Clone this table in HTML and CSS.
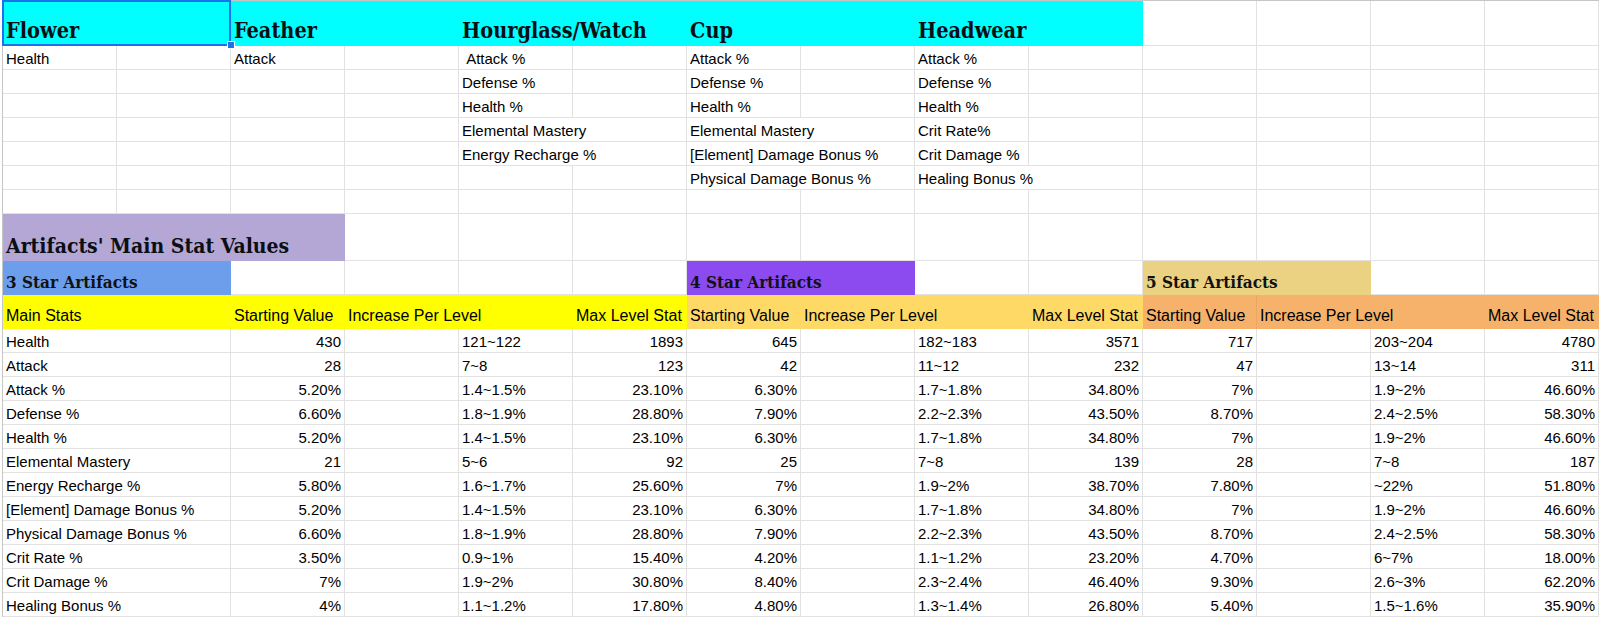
FILE: index.html
```html
<!DOCTYPE html>
<html lang="en">
<head>
<meta charset="utf-8">
<title>Artifacts' Main Stat Values</title>
<link rel="stylesheet" href="styles.css">
</head>
<body>
<div class="sheet">
  <!-- Row 1 -->
  <div class="c s2 cyan h1 sel">Flower</div>
  <div class="c s2 cyan h1">Feather</div>
  <div class="c s2 cyan h1">Hourglass/Watch</div>
  <div class="c s2 cyan h1">Cup</div>
  <div class="c s2 cyan h1">Headwear</div>
  <div class="c"></div><div class="c"></div><div class="c"></div><div class="c"></div>

  <!-- Row 2 -->
  <div class="c">Health</div><div class="c"></div>
  <div class="c">Attack</div><div class="c"></div>
  <div class="c">&nbsp;Attack %</div><div class="c"></div>
  <div class="c">Attack %</div><div class="c"></div>
  <div class="c">Attack %</div><div class="c"></div>
  <div class="c"></div><div class="c"></div><div class="c"></div><div class="c"></div>

  <!-- Row 3 -->
  <div class="c"></div><div class="c"></div><div class="c"></div><div class="c"></div>
  <div class="c">Defense %</div><div class="c"></div>
  <div class="c">Defense %</div><div class="c"></div>
  <div class="c">Defense %</div><div class="c"></div>
  <div class="c"></div><div class="c"></div><div class="c"></div><div class="c"></div>

  <!-- Row 4 -->
  <div class="c"></div><div class="c"></div><div class="c"></div><div class="c"></div>
  <div class="c">Health %</div><div class="c"></div>
  <div class="c">Health %</div><div class="c"></div>
  <div class="c">Health %</div><div class="c"></div>
  <div class="c"></div><div class="c"></div><div class="c"></div><div class="c"></div>

  <!-- Row 5 -->
  <div class="c"></div><div class="c"></div><div class="c"></div><div class="c"></div>
  <div class="c s2">Elemental Mastery</div>
  <div class="c s2">Elemental Mastery</div>
  <div class="c">Crit Rate%</div><div class="c"></div>
  <div class="c"></div><div class="c"></div><div class="c"></div><div class="c"></div>

  <!-- Row 6 -->
  <div class="c"></div><div class="c"></div><div class="c"></div><div class="c"></div>
  <div class="c s2">Energy Recharge %</div>
  <div class="c s2">[Element] Damage Bonus %</div>
  <div class="c">Crit Damage %</div><div class="c"></div>
  <div class="c"></div><div class="c"></div><div class="c"></div><div class="c"></div>

  <!-- Row 7 -->
  <div class="c"></div><div class="c"></div><div class="c"></div><div class="c"></div>
  <div class="c"></div><div class="c"></div>
  <div class="c s2">Physical Damage Bonus %</div>
  <div class="c s2">Healing Bonus %</div>
  <div class="c"></div><div class="c"></div><div class="c"></div><div class="c"></div>

  <!-- Row 8 -->
  <div class="c"></div><div class="c"></div><div class="c"></div><div class="c"></div>
  <div class="c"></div><div class="c"></div><div class="c"></div><div class="c"></div>
  <div class="c"></div><div class="c"></div><div class="c"></div><div class="c"></div>
  <div class="c"></div><div class="c"></div>

  <!-- Row 9 -->
  <div class="c s3 lilac h1 title">Artifacts' Main Stat Values</div>
  <div class="c"></div><div class="c"></div><div class="c"></div><div class="c"></div>
  <div class="c"></div><div class="c"></div><div class="c"></div><div class="c"></div>
  <div class="c"></div><div class="c"></div><div class="c"></div>

  <!-- Row 10 -->
  <div class="c s2 blue star">3 Star Artifacts</div>
  <div class="c"></div><div class="c"></div><div class="c"></div><div class="c"></div>
  <div class="c s2 violet star">4 Star Artifacts</div>
  <div class="c"></div><div class="c"></div>
  <div class="c s2 tan star">5 Star Artifacts</div>
  <div class="c"></div><div class="c"></div>

  <!-- Row 11 -->
  <div class="c s2 yellow hd">Main Stats</div>
  <div class="c yellow hd">Starting Value</div>
  <div class="c s2 yellow hd">Increase Per Level</div>
  <div class="c yellow hd">Max Level Stat</div>
  <div class="c gold hd">Starting Value</div>
  <div class="c s2 gold hd">Increase Per Level</div>
  <div class="c gold hd">Max Level Stat</div>
  <div class="c orange hd split">Starting Value</div>
  <div class="c s2 orange hd">Increase Per Level</div>
  <div class="c orange hd">Max Level Stat</div>

  <!-- Data rows -->
  <div class="c s2">Health</div>
  <div class="c r">430</div><div class="c"></div><div class="c">121~122</div><div class="c r">1893</div>
  <div class="c r">645</div><div class="c"></div><div class="c">182~183</div><div class="c r">3571</div>
  <div class="c r">717</div><div class="c"></div><div class="c">203~204</div><div class="c r">4780</div>

  <div class="c s2">Attack</div>
  <div class="c r">28</div><div class="c"></div><div class="c">7~8</div><div class="c r">123</div>
  <div class="c r">42</div><div class="c"></div><div class="c">11~12</div><div class="c r">232</div>
  <div class="c r">47</div><div class="c"></div><div class="c">13~14</div><div class="c r">311</div>

  <div class="c s2">Attack %</div>
  <div class="c r">5.20%</div><div class="c"></div><div class="c">1.4~1.5%</div><div class="c r">23.10%</div>
  <div class="c r">6.30%</div><div class="c"></div><div class="c">1.7~1.8%</div><div class="c r">34.80%</div>
  <div class="c r">7%</div><div class="c"></div><div class="c">1.9~2%</div><div class="c r">46.60%</div>

  <div class="c s2">Defense %</div>
  <div class="c r">6.60%</div><div class="c"></div><div class="c">1.8~1.9%</div><div class="c r">28.80%</div>
  <div class="c r">7.90%</div><div class="c"></div><div class="c">2.2~2.3%</div><div class="c r">43.50%</div>
  <div class="c r">8.70%</div><div class="c"></div><div class="c">2.4~2.5%</div><div class="c r">58.30%</div>

  <div class="c s2">Health %</div>
  <div class="c r">5.20%</div><div class="c"></div><div class="c">1.4~1.5%</div><div class="c r">23.10%</div>
  <div class="c r">6.30%</div><div class="c"></div><div class="c">1.7~1.8%</div><div class="c r">34.80%</div>
  <div class="c r">7%</div><div class="c"></div><div class="c">1.9~2%</div><div class="c r">46.60%</div>

  <div class="c s2">Elemental Mastery</div>
  <div class="c r">21</div><div class="c"></div><div class="c">5~6</div><div class="c r">92</div>
  <div class="c r">25</div><div class="c"></div><div class="c">7~8</div><div class="c r">139</div>
  <div class="c r">28</div><div class="c"></div><div class="c">7~8</div><div class="c r">187</div>

  <div class="c s2">Energy Recharge %</div>
  <div class="c r">5.80%</div><div class="c"></div><div class="c">1.6~1.7%</div><div class="c r">25.60%</div>
  <div class="c r">7%</div><div class="c"></div><div class="c">1.9~2%</div><div class="c r">38.70%</div>
  <div class="c r">7.80%</div><div class="c"></div><div class="c">~22%</div><div class="c r">51.80%</div>

  <div class="c s2">[Element] Damage Bonus %</div>
  <div class="c r">5.20%</div><div class="c"></div><div class="c">1.4~1.5%</div><div class="c r">23.10%</div>
  <div class="c r">6.30%</div><div class="c"></div><div class="c">1.7~1.8%</div><div class="c r">34.80%</div>
  <div class="c r">7%</div><div class="c"></div><div class="c">1.9~2%</div><div class="c r">46.60%</div>

  <div class="c s2">Physical Damage Bonus %</div>
  <div class="c r">6.60%</div><div class="c"></div><div class="c">1.8~1.9%</div><div class="c r">28.80%</div>
  <div class="c r">7.90%</div><div class="c"></div><div class="c">2.2~2.3%</div><div class="c r">43.50%</div>
  <div class="c r">8.70%</div><div class="c"></div><div class="c">2.4~2.5%</div><div class="c r">58.30%</div>

  <div class="c s2">Crit Rate %</div>
  <div class="c r">3.50%</div><div class="c"></div><div class="c">0.9~1%</div><div class="c r">15.40%</div>
  <div class="c r">4.20%</div><div class="c"></div><div class="c">1.1~1.2%</div><div class="c r">23.20%</div>
  <div class="c r">4.70%</div><div class="c"></div><div class="c">6~7%</div><div class="c r">18.00%</div>

  <div class="c s2">Crit Damage %</div>
  <div class="c r">7%</div><div class="c"></div><div class="c">1.9~2%</div><div class="c r">30.80%</div>
  <div class="c r">8.40%</div><div class="c"></div><div class="c">2.3~2.4%</div><div class="c r">46.40%</div>
  <div class="c r">9.30%</div><div class="c"></div><div class="c">2.6~3%</div><div class="c r">62.20%</div>

  <div class="c s2">Healing Bonus %</div>
  <div class="c r">4%</div><div class="c"></div><div class="c">1.1~1.2%</div><div class="c r">17.80%</div>
  <div class="c r">4.80%</div><div class="c"></div><div class="c">1.3~1.4%</div><div class="c r">26.80%</div>
  <div class="c r">5.40%</div><div class="c"></div><div class="c">1.5~1.6%</div><div class="c r">35.90%</div>
</div>
</body>
</html>
```

FILE: styles.css
```css
html, body {
  margin: 0;
  padding: 0;
  background: #ffffff;
}

.sheet {
  display: grid;
  grid-template-columns: repeat(14, 114px);
  grid-template-rows: 45px repeat(7, 24px) 47px 34px 34px repeat(12, 24px);
  width: max-content;
  margin-left: 2px;
  border-left: 1px solid #c6c6c6;
  border-top: 1px solid #c6c6c6;
  font-family: "Liberation Sans", Arial, sans-serif;
  font-size: 15px;
  color: #000000;
}

.c {
  box-sizing: border-box;
  min-width: 0;
  display: flex;
  align-items: flex-end;
  padding: 0 3px 2px 3px;
  border-right: 1px solid #e2e2e2;
  border-bottom: 1px solid #e2e2e2;
  line-height: 17px;
  white-space: nowrap;
  overflow: hidden;
}

.s2 { grid-column: span 2; }
.s3 { grid-column: span 3; }

.r { justify-content: flex-end; }

/* Fills: gridlines hidden under coloured cells */
.cyan   { background: #00ffff; border-color: transparent; }
.lilac  { background: #b4a7d6; border-color: transparent; }
.blue   { background: #6d9eeb; border-color: transparent; }
.violet { background: #8b4bef; border-color: transparent; }
.tan    { background: #ebd283; border-color: transparent; }
.yellow { background: #ffff00; border-color: transparent; }
.gold   { background: #ffd966; border-color: transparent; }
.orange { background: #f6b26b; border-color: transparent; }
.orange.split { border-right-color: #e9a862; }

/* Serif headings */
.h1 {
  font-family: "DejaVu Serif", "Liberation Serif", serif;
  font-stretch: condensed;
  font-weight: bold;
  font-size: 21.5px;
  line-height: 26px;
  padding-bottom: 1px;
  color: #0a0f14;
}

.title {
  font-size: 21px;
  padding-bottom: 1px;
}

.star {
  font-family: "DejaVu Serif", "Liberation Serif", serif;
  font-stretch: condensed;
  font-weight: bold;
  font-size: 17px;
  line-height: 20px;
  padding-bottom: 2px;
  color: #121212;
}

/* Column header row */
.hd {
  font-size: 16px;
  line-height: 18px;
  padding-bottom: 3px;
}

/* Active selection on A1:B1 */
.sel {
  position: relative;
  overflow: visible;
}
.sel::before {
  content: "";
  position: absolute;
  top: -1px;
  left: -1px;
  right: -1px;
  bottom: -1px;
  border: 2px solid #1a73e8;
  pointer-events: none;
}
.sel::after {
  content: "";
  position: absolute;
  right: -5px;
  bottom: -4px;
  width: 6px;
  height: 6px;
  background: #1a73e8;
  border: 1px solid #ffffff;
  z-index: 2;
}
```
